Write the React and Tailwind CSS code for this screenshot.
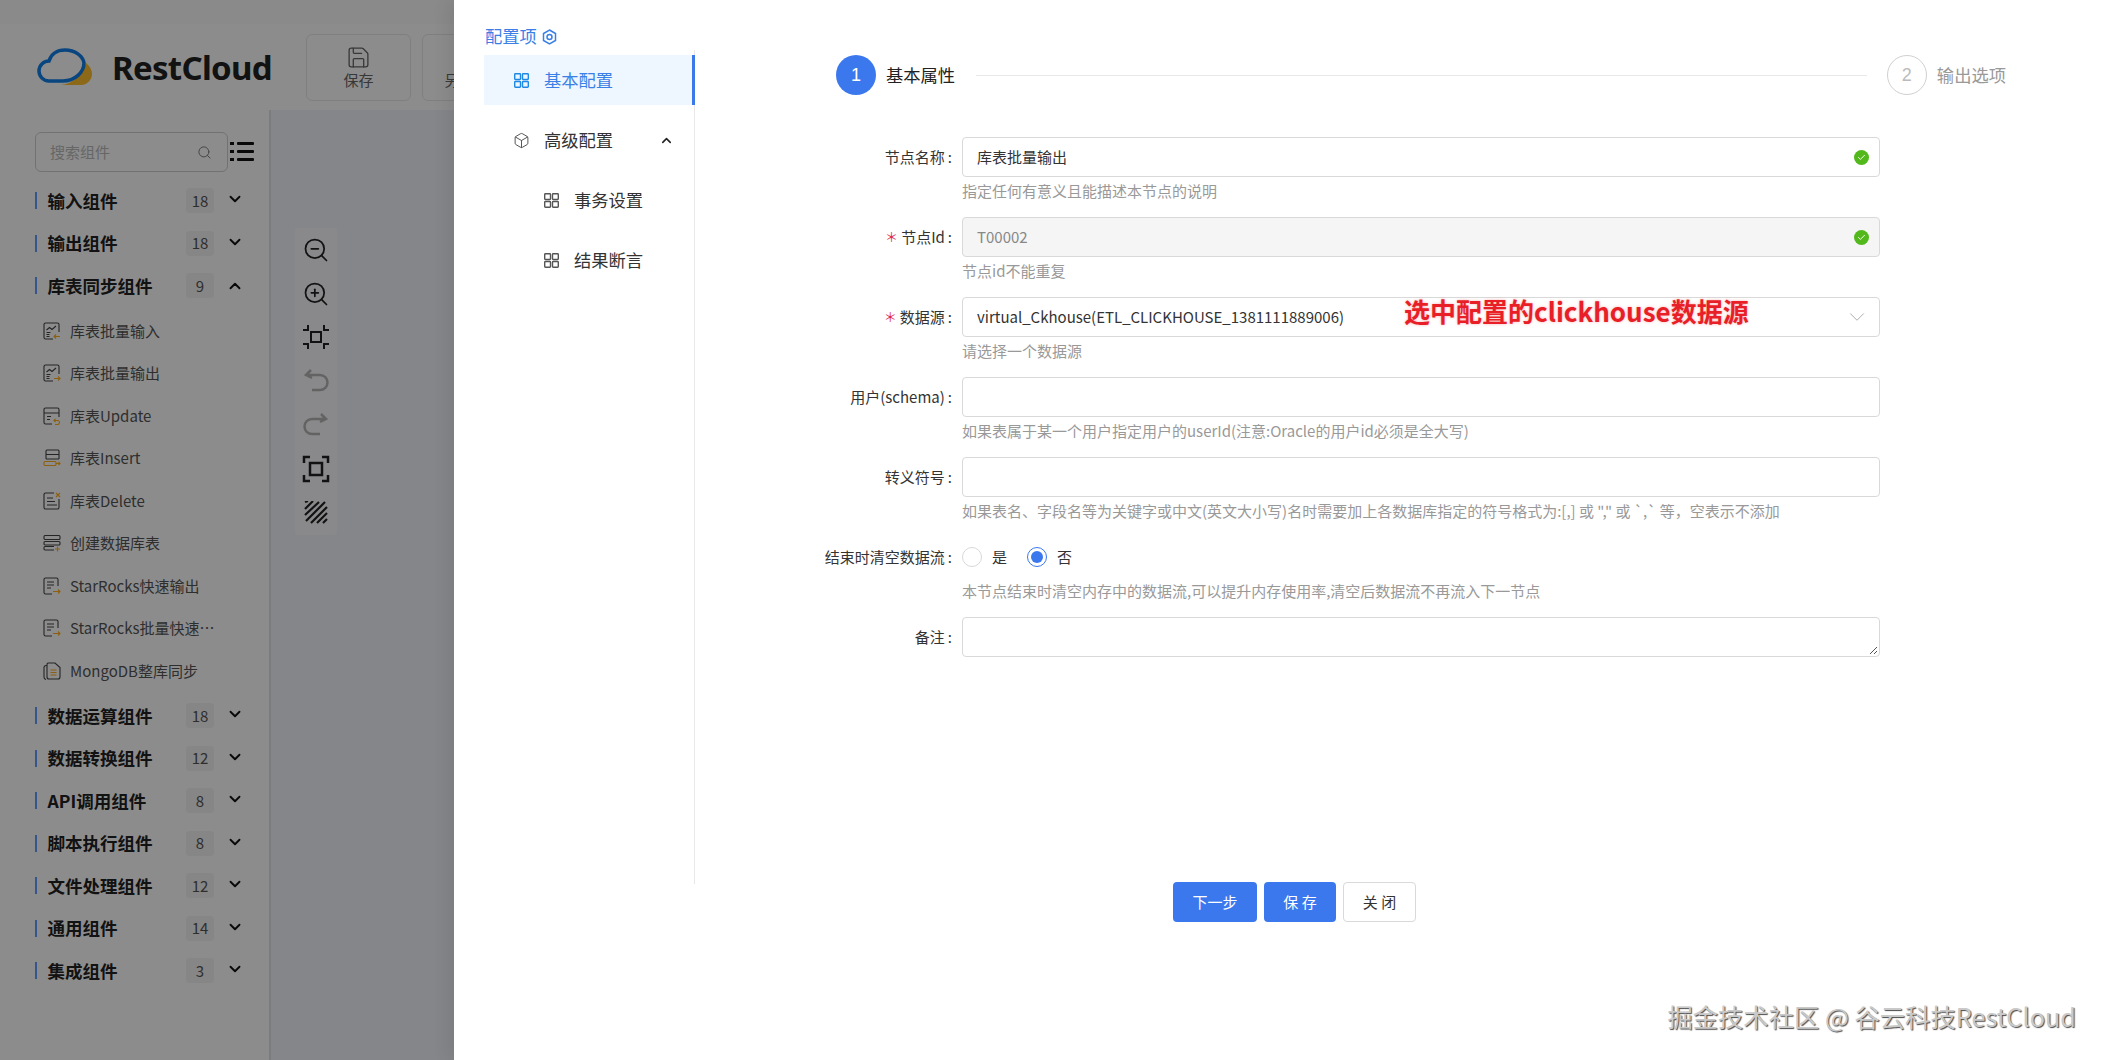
import { ChevronDown, ChevronUp, Search, Save, Box, ZoomIn, ZoomOut, Check } from "lucide-react";

const groupsTop = [
  { name: "输入组件", count: 18 },
  { name: "输出组件", count: 18 },
];
const groupsBottom = [
  { name: "数据运算组件", count: 18 },
  { name: "数据转换组件", count: 12 },
  { name: "API调用组件", count: 8 },
  { name: "脚本执行组件", count: 8 },
  { name: "文件处理组件", count: 12 },
  { name: "通用组件", count: 14 },
  { name: "集成组件", count: 3 },
];

const accent = "#ffae1f";
const line = "#444";

// little node icons in the component list, grey body with an orange accent
function NodeIcon({ kind }) {
  return (
    <svg width="18" height="18" viewBox="0 0 18 18" fill="none" stroke={line} strokeWidth="1.1" className="shrink-0">
      {(kind === "in" || kind === "out") && (
        <>
          <path d="M10 17H2.500A1.500 1.500 0 0 1 1 15.500v-13A1.500 1.500 0 0 1 2.500 1h12A1.500 1.500 0 0 1 16 2.500V10" />
          <path d="M3.500 8l3-2.500 2.500 2 4-3.500" />
          <path d="M3.500 10.500h4M3.500 12.500h3M3.500 14.500h3" />
          {kind === "in" ? (
            <path d="M17 14.500h-6M13 12.500l-2 2 2 2" stroke={accent} />
          ) : (
            <path d="M11 14.500h6M15 12.500l2 2-2 2" stroke={accent} />
          )}
        </>
      )}
      {kind === "update" && (
        <>
          <path d="M9 17H2.500A1.500 1.500 0 0 1 1 15.500v-13A1.500 1.500 0 0 1 2.500 1h12A1.500 1.500 0 0 1 16 2.500V10" />
          <path d="M1 6h15M4 9.500h4M4 12.500h3" />
          <path d="M11 13.500h3.500a2 2 0 0 1 0 4H12M12.500 12l-1.500 1.500 1.500 1.500" stroke={accent} />
        </>
      )}
      {kind === "insert" && (
        <>
          <path d="M3 10V2a1 1 0 0 1 1-1h11a1 1 0 0 1 1 1v8M3 5.500h13M3 10h13" />
          <rect x="1" y="12.500" width="12" height="4" rx="1" stroke={accent} />
          <path d="M13 14.500h4M15.500 13l1.500 1.500-1.500 1.500" stroke={accent} />
        </>
      )}
      {kind === "delete" && (
        <>
          <path d="M11 1H2.500A1.500 1.500 0 0 0 1 2.500v13A1.500 1.500 0 0 0 2.500 17h12a1.500 1.500 0 0 0 1.500-1.500V7" />
          <path d="M4 6h6M4 9.500h8M4 13h10" />
          <path d="M13 1l4 4M17 1l-4 4" stroke={accent} />
        </>
      )}
      {kind === "create" && (
        <>
          <rect x="1" y="1.500" width="16" height="4" rx="1" />
          <rect x="1" y="7.500" width="16" height="3.500" rx="1" />
          <path d="M11 16H2a1 1 0 0 1-1-1v-1.500a1 1 0 0 1 1-1h9" />
          <path d="M14.500 12.500v5M12 15h5" stroke={accent} />
        </>
      )}
      {kind === "doc" && (
        <>
          <path d="M15 9V2.500A1.500 1.500 0 0 0 13.500 1h-11A1.500 1.500 0 0 0 1 2.500v13A1.500 1.500 0 0 0 2.500 17H9" />
          <path d="M4 5h7M4 8h7M4 11h4" />
          <path d="M10 14.500h7M15 12.500l2 2-2 2" stroke={accent} />
        </>
      )}
      {kind === "mongo" && (
        <>
          <path d="M5 1h7l5 4.500V15a2 2 0 0 1-2 2H6a2 2 0 0 1-2-2V3a2 2 0 0 1 1-2z" />
          <path d="M4 3.500H3a2 2 0 0 0-2 2V15a2.500 2.500 0 0 0 2 2.500" />
          <path d="M7.500 8h6M7.500 10.500h6M7.500 13h6" stroke={accent} />
        </>
      )}
    </svg>
  );
}

const listItems = [
  { name: "库表批量输入", kind: "in" },
  { name: "库表批量输出", kind: "out" },
  { name: "库表Update", kind: "update" },
  { name: "库表Insert", kind: "insert" },
  { name: "库表Delete", kind: "delete" },
  { name: "创建数据库表", kind: "create" },
  { name: "StarRocks快速输出", kind: "doc" },
  { name: "StarRocks批量快速输出", kind: "doc" },
  { name: "MongoDB整库同步", kind: "mongo" },
];

function Group({ name, count, open }) {
  return (
    <div className="flex h-[42.5px] items-center">
      <span className="h-[17px] w-[2px] bg-[#5f9dff]" />
      <span className="ml-[10.5px] w-[138.5px] text-[17.5px] font-bold text-[#222]">{name}</span>
      <span className="flex h-[25px] w-[28px] items-center justify-center rounded bg-[#f4f4f4] text-[15px] text-[#555]">{count}</span>
      {open ? (
        <ChevronUp size={18} strokeWidth={2.5} className="ml-[12px] text-[#111]" />
      ) : (
        <ChevronDown size={18} strokeWidth={2.5} className="ml-[12px] -mt-[3px] text-[#111]" />
      )}
    </div>
  );
}

function Sidebar() {
  return (
    <aside className="h-full w-[271px] shrink-0 border-r-2 border-[#dfe3ea] pl-[35px] pt-[22px]">
      <div className="flex h-[40px] items-center">
        <div className="flex h-[40px] w-[193px] items-center justify-between rounded-md border border-[#d0d0d0] pl-[14px] pr-[15px] text-[15px] text-[#bbb]">
          搜索组件
          <Search size={15} strokeWidth={1.5} className="text-[#777]" />
        </div>
        <svg width="24" height="22" viewBox="0 0 24 22" className="ml-[2px] text-[#111]" fill="currentColor">
          <rect x="0" y="1" width="4" height="3" />
          <rect x="7" y="1" width="17" height="3" rx="1" />
          <rect x="0" y="9" width="4" height="3" />
          <rect x="7" y="9" width="17" height="3" rx="1" />
          <rect x="0" y="17" width="4" height="3" />
          <rect x="7" y="17" width="17" height="3" rx="1" />
        </svg>
      </div>
      <div className="mt-[7.5px]">
        {groupsTop.map((g) => (
          <Group key={g.name} {...g} />
        ))}
        <Group name="库表同步组件" count={9} open />
        <div className="my-[2.5px]">
          {listItems.map((item) => (
            <div key={item.name} className="flex h-[42.5px] items-center pl-[8px] text-[15px] text-[#555]">
              <NodeIcon kind={item.kind} />
              <span className="ml-[9px] w-[148px] truncate">{item.name}</span>
            </div>
          ))}
        </div>
        {groupsBottom.map((g) => (
          <Group key={g.name} {...g} />
        ))}
      </div>
    </aside>
  );
}

function ToolButton({ children }) {
  return <div className="flex h-[43.8px] items-center justify-center">{children}</div>;
}

function CanvasTools() {
  return (
    <div className="absolute left-[24px] top-[118px] w-[42px] rounded bg-white/50">
      <ToolButton>
        <ZoomOut size={28} strokeWidth={1.5} className="text-[#222]" />
      </ToolButton>
      <ToolButton>
        <ZoomIn size={28} strokeWidth={1.5} className="text-[#222]" />
      </ToolButton>
      <ToolButton>
        <svg width="28" height="28" viewBox="0 0 28 28" fill="none" stroke="#222" strokeWidth="2">
          <rect x="9" y="9" width="10" height="10" />
          <path d="M1 7h5V2M22 2v5h5M27 21h-5v5M6 26v-5H1" />
        </svg>
      </ToolButton>
      <ToolButton>
        <svg width="26" height="26" viewBox="0 0 26 26" fill="none" stroke="#b4b4b4" strokeWidth="2.5">
          <path d="M8 2L3 7l6 3M3 7h14a7.500 7.500 0 0 1 0 15H9" />
        </svg>
      </ToolButton>
      <ToolButton>
        <svg width="26" height="26" viewBox="0 0 26 26" fill="none" stroke="#b4b4b4" strokeWidth="2.5">
          <path d="M18 2l5 5-6 3M23 7H9a7.500 7.500 0 0 0 0 15h8" />
        </svg>
      </ToolButton>
      <ToolButton>
        <svg width="28" height="28" viewBox="0 0 28 28" fill="none" stroke="#222" strokeWidth="2.5">
          <rect x="8" y="8" width="12" height="12" />
          <path d="M2 8V2h6M20 2h6v6M26 20v6h-6M8 26H2v-6" />
        </svg>
      </ToolButton>
      <ToolButton>
        <svg width="24" height="24" viewBox="0 0 24 24" fill="none" stroke="#222" strokeWidth="2.2">
          <path d="M1 1l3-1M1 8l8-8M1 14L15 1M2 20L21 1M7 22L23 6M13 22l10-10M19 22l4-4" />
        </svg>
      </ToolButton>
    </div>
  );
}

function HeaderButton({ label, icon }) {
  return (
    <div className="flex h-[67px] w-[105px] shrink-0 flex-col items-center justify-center rounded-md border border-[#e8e8e8] text-[15px] leading-[20px] text-[#666]">
      {icon}
      <span className="whitespace-nowrap">{label}</span>
    </div>
  );
}

function BackgroundPage() {
  return (
    <div className="flex h-full flex-col bg-white">
      <div className="h-[24px] shrink-0 bg-[#fbfbfb]" />
      <header className="flex h-[86px] shrink-0 items-center">
        <svg width="56" height="38" viewBox="0 0 56 38" fill="none" className="ml-[37px]">
          <path d="M24 37C36 36 46 26 49 15C53 18 55 22 55 26C55 32 50 37 44 37Z" fill="#ffbd2e" />
          <path
            d="M12 33C6 33 2 28 2 23C2 17 7 13 12 13C14 6 20 2 28 2C38 2 46 8 47 15C47 24 38 33 26 33Z"
            stroke="#127fe8"
            strokeWidth="3.5"
          />
        </svg>
        <span className="ml-[19px] mt-[1px] w-[174px] whitespace-nowrap font-['Noto_Sans'] text-[33px] font-bold tracking-[-0.7px] text-[#222]">RestCloud</span>
        <div className="ml-[20px] flex gap-[11px]">
          <HeaderButton label="保存" icon={<Save size={25} strokeWidth={1.25} />} />
          <HeaderButton label="另存版本" icon={<Save size={25} strokeWidth={1.25} />} />
        </div>
      </header>
      <div className="flex min-h-0 flex-1">
        <Sidebar />
        <div className="relative flex-1 bg-[#f2f5fb]">
          <CanvasTools />
        </div>
      </div>
    </div>
  );
}

function GridIcon({ className }) {
  return (
    <svg width="15" height="15" viewBox="0 0 15 15" fill="none" stroke="currentColor" strokeWidth="1.4" className={className}>
      <rect x="0.700" y="0.700" width="5.800" height="5.800" rx="0.75" />
      <rect x="8.500" y="0.700" width="5.800" height="5.800" rx="0.75" />
      <rect x="0.700" y="8.500" width="5.800" height="5.800" rx="0.75" />
      <rect x="8.500" y="8.500" width="5.800" height="5.800" rx="0.75" />
    </svg>
  );
}

function ConfigMenu() {
  return (
    <div className="shrink-0 pl-[30px] pt-[23px]">
      <div className="flex h-[26px] items-center pl-[1px] text-[17.3px] text-[#3b7fe6]">
        配置项
        <svg width="15" height="16" viewBox="0 0 15 16" fill="none" stroke="currentColor" strokeWidth="1.5" className="ml-[5px] mt-[2px]">
          <path d="M7.500 1l6 3.500v7l-6 3.500-6-3.500v-7z" />
          <circle cx="7.500" cy="8" r="2.500" />
        </svg>
      </div>
      <div className="mt-px flex h-[834px] w-[211px] flex-col gap-[10px] border-r border-[#e8e8e8] pt-[5px] text-[17.3px] text-[#333]">
        <div className="-mr-px flex h-[50px] items-center border-r-[3px] border-[#3b78e8] bg-[#eef6ff] pl-[30px] text-[#3b80e6]">
          <GridIcon className="text-[#1e88e5]" />
          <span className="ml-[15px]">基本配置</span>
        </div>
        <div className="flex h-[50px] items-center pl-[29px]">
          <Box size={17} strokeWidth={1.4} className="text-[#555]" />
          <span className="ml-[14px]">高级配置</span>
          <ChevronUp size={15} strokeWidth={2.5} className="ml-[46px] text-[#222]" />
        </div>
        <div className="flex h-[50px] items-center pl-[60px]">
          <GridIcon className="text-[#555]" />
          <span className="ml-[15px]">事务设置</span>
        </div>
        <div className="flex h-[50px] items-center pl-[60px]">
          <GridIcon className="text-[#555]" />
          <span className="ml-[15px]">结果断言</span>
        </div>
      </div>
    </div>
  );
}

function Stepper() {
  return (
    <div className="flex h-[40px] items-center">
      <span className="flex size-[40px] items-center justify-center rounded-full bg-[#3b78ee] font-['Liberation_Sans'] text-[18px] text-white">1</span>
      <span className="ml-[10px] text-[17.3px] text-[#222]">基本属性</span>
      <span className="ml-[21px] h-px flex-1 bg-[#e8e8e8]" />
      <span className="ml-[20px] flex size-[40px] items-center justify-center rounded-full border border-[#d0d0d0] font-['Liberation_Sans'] text-[18px] text-[#bbb]">2</span>
      <span className="ml-[10px] text-[17.3px] text-[#999]">输出选项</span>
    </div>
  );
}

function CheckMark() {
  return (
    <span className="flex size-[15px] items-center justify-center rounded-full bg-[#52b81c]">
      <Check size={9} strokeWidth={2.5} className="text-white" />
    </span>
  );
}

function FormRow({ label, required, help, children }) {
  return (
    <div className="flex h-[80px]">
      <div className="flex h-[40px] w-[140px] shrink-0 items-center justify-end text-[15px] text-[#333]">
        {required && <span className="mr-[3px] text-[13px] text-[#e0284e]">＊</span>}
        <span>{label}</span>
        <span className="ml-[3px]">:</span>
      </div>
      <div className="ml-[10px] w-[918px]">
        {children}
        {help && <div className="h-[28px] text-[15px] leading-[28px] text-[#999]">{help}</div>}
      </div>
    </div>
  );
}

function TextBox({ value, disabled, check }) {
  return (
    <div className={`flex h-[40px] items-center justify-between rounded border border-[#d9d9d9] pl-[14px] pr-[10px] text-[15px] ${disabled ? "bg-[#f5f5f5] text-[#888]" : "bg-white text-[#333]"}`}>
      <span>{value}</span>
      {check && <CheckMark />}
    </div>
  );
}

function BasicForm() {
  return (
    <div className="-ml-[24px] mt-[42px]">
      <FormRow label="节点名称" help="指定任何有意义且能描述本节点的说明">
        <TextBox value="库表批量输出" check />
      </FormRow>
      <FormRow label="节点Id" required help="节点id不能重复">
        <TextBox value="T00002" disabled check />
      </FormRow>
      <FormRow label="数据源" required help="请选择一个数据源">
        <div className="relative flex h-[40px] items-center justify-between rounded border border-[#d9d9d9] pl-[14px] pr-[9px] text-[15px] text-[#333]">
          virtual_Ckhouse(ETL_CLICKHOUSE_1381111889006)
          <ChevronDown size={26} strokeWidth={0.9} className="text-[#aaa]" />
          <span className="absolute left-[441px] top-[-7px] whitespace-nowrap text-[26px] font-bold leading-[40px] text-[#e81f27] [text-shadow:0_0_3px_rgba(232,31,39,0.35)]">
            选中配置的clickhouse数据源
          </span>
        </div>
      </FormRow>
      <FormRow label="用户(schema)" help="如果表属于某一个用户指定用户的userId(注意:Oracle的用户id必须是全大写)">
        <TextBox value="" />
      </FormRow>
      <FormRow label="转义符号" help="如果表名、字段名等为关键字或中文(英文大小写)名时需要加上各数据库指定的符号格式为:[,] 或 &quot;,&quot; 或 `,` 等，空表示不添加">
        <TextBox value="" />
      </FormRow>
      <FormRow label="结束时清空数据流" help="本节点结束时清空内存中的数据流,可以提升内存使用率,清空后数据流不再流入下一节点">
        <div className="flex h-[40px] items-center text-[15px] text-[#333]">
          <span className="size-[20px] rounded-full border border-[#d9d9d9]" />
          <span className="ml-[10px]">是</span>
          <span className="ml-[20px] flex size-[20px] items-center justify-center rounded-full border border-[#3b78ee]">
            <span className="size-[12px] rounded-full bg-[#3b78ee]" />
          </span>
          <span className="ml-[10px]">否</span>
        </div>
      </FormRow>
      <FormRow label="备注">
        <div className="relative h-[40px] rounded border border-[#d9d9d9]">
          <svg width="9" height="9" viewBox="0 0 9 9" stroke="#555" className="absolute bottom-px right-px">
            <path d="M8 1L1 8M8 5L5 8" />
          </svg>
        </div>
      </FormRow>
    </div>
  );
}

export default function App() {
  return (
    <div className="relative h-screen w-full overflow-hidden font-['Noto_Sans_CJK_SC','Noto_Sans',sans-serif]">
      <BackgroundPage />
      <div className="absolute inset-0 bg-black/45" />
      <div className="absolute bottom-0 left-[454px] right-0 top-0 flex bg-white shadow-[-6px_0_16px_rgba(0,0,0,0.08)]">
        <ConfigMenu />
        <div className="flex-1 pl-[141px] pr-[98px] pt-[55px]">
          <Stepper />
          <BasicForm />
          <div className="mt-[185px] flex gap-[7px] pl-[337px] text-[15px]">
            <button className="h-[40px] w-[84px] rounded bg-[#3b78ee] text-white">下一步</button>
            <button className="h-[40px] w-[72px] rounded bg-[#3b78ee] text-white">保 存</button>
            <button className="h-[40px] w-[73px] rounded border border-[#d9d9d9] text-[#333]">关 闭</button>
          </div>
        </div>
      </div>
      <div className="absolute bottom-[28px] right-[28px] text-[25.3px] leading-[32px] text-[#c9c9c9] [text-shadow:1px_1px_1px_#4a4a4a]">
        掘金技术社区 @ 谷云科技RestCloud
      </div>
    </div>
  );
}
